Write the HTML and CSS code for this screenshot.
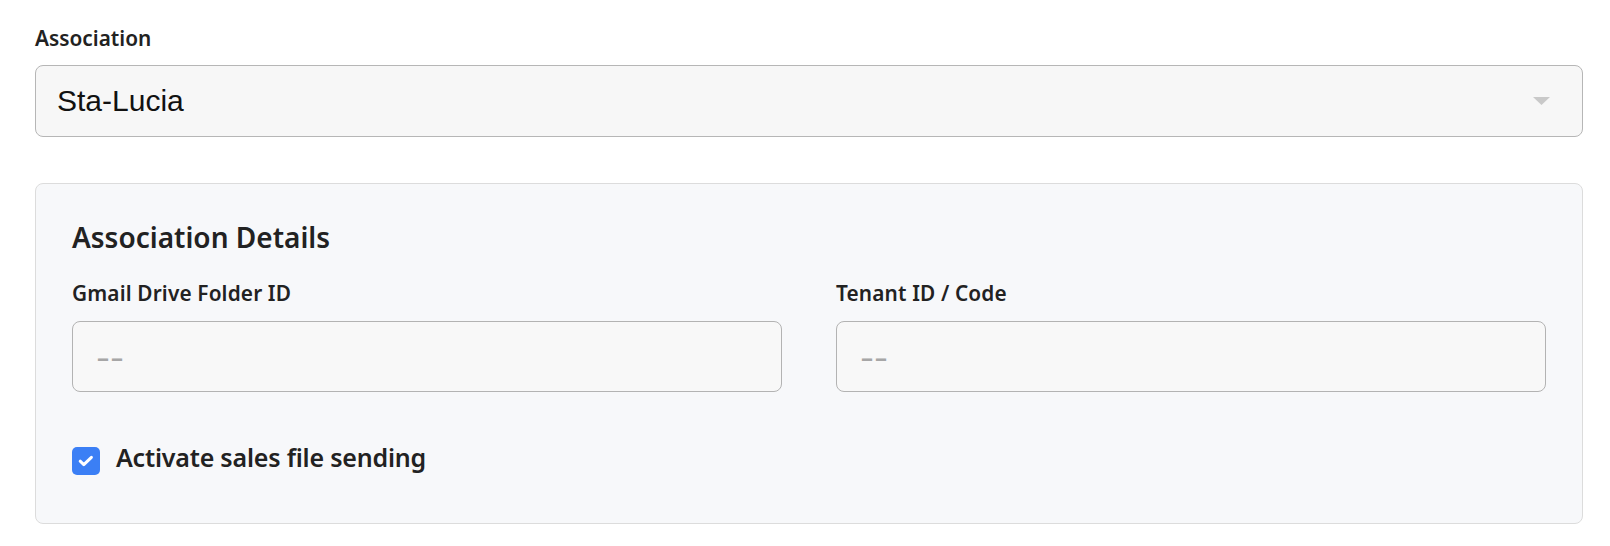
FILE: index.html
```html
<!DOCTYPE html>
<html lang="en">
<head>
<meta charset="utf-8">
<title>Association</title>
<link rel="stylesheet" href="styles.css">
</head>
<body>
<div class="page">
  <label class="label">Association</label>
  <div class="select">
    <span class="select-value">Sta-Lucia</span>
    <svg class="select-arrow" width="17" height="8" viewBox="0 0 17 8" aria-hidden="true"><polygon points="0,0 17,0 8.5,8" fill="#c9c9c9"/></svg>
  </div>

  <section class="card">
    <h2 class="card-title">Association Details</h2>
    <div class="fields">
      <div class="field">
        <label class="label">Gmail Drive Folder ID</label>
        <div class="input"><span class="placeholder">––</span></div>
      </div>
      <div class="field">
        <label class="label">Tenant ID / Code</label>
        <div class="input"><span class="placeholder">––</span></div>
      </div>
    </div>
    <div class="check-row">
      <span class="checkbox">
        <svg width="28" height="28" viewBox="0 0 28 28" aria-hidden="true"><path d="M8.2 14.2 L11.8 17.6 L19.4 10.4" fill="none" stroke="#fff" stroke-width="3" stroke-linecap="round" stroke-linejoin="round"/></svg>
      </span>
      <span class="check-label">Activate sales file sending</span>
    </div>
  </section>
</div>
</body>
</html>
```

FILE: styles.css
```css
* { box-sizing: border-box; }
html, body { margin: 0; padding: 0; background: #ffffff; }
body { font-family: "Noto Sans", "Open Sans", sans-serif; color: #222222; }

.page {
  padding: 24px 27px 0 35px;
}

.label {
  display: block;
  font-size: 20.8px;
  line-height: 28px;
  font-weight: 600;
  color: #222222;
  margin-bottom: 13px;
}
.field .label { letter-spacing: 0.15px; }

.select {
  height: 72px;
  border: 1px solid #b6b6b6;
  border-radius: 8px;
  background: #f7f7f7;
  display: flex;
  align-items: center;
  justify-content: space-between;
  padding: 0 32px 0 21px;
}
.select-value {
  font-family: "Liberation Sans", Arial, sans-serif;
  font-size: 30px;
  color: #111111;
}
.select-arrow { display: block; }

.card {
  margin-top: 46px;
  border: 1px solid #dcdcdc;
  border-radius: 8px;
  background: #f7f8fa;
  padding: 35px 36px 48px 36px;
}
.card-title {
  margin: 0 0 24px 0;
  font-size: 28px;
  line-height: 36px;
  font-weight: 600;
  color: #222222;
}

.fields {
  display: grid;
  grid-template-columns: 1fr 1fr;
  column-gap: 54px;
}
.field .label { margin-bottom: 14px; }

.input {
  height: 71px;
  border: 1px solid #b3b3b3;
  border-radius: 8px;
  background: #f8f8f8;
  display: flex;
  align-items: center;
  padding: 0 0 0 24px;
}
.placeholder {
  font-size: 24px;
  font-weight: 700;
  color: #a6a6a6;
  letter-spacing: 2px;
}

.check-row {
  margin-top: 48px;
  display: flex;
  align-items: flex-start;
  gap: 16px;
}
.checkbox {
  width: 28px;
  height: 28px;
  margin-top: 7px;
  border-radius: 5px;
  background: #3b7ff5;
  flex: none;
}
.checkbox svg { display: block; }
.check-label {
  font-size: 25px;
  line-height: 34px;
  font-weight: 600;
  letter-spacing: -0.2px;
  color: #222222;
}
```
